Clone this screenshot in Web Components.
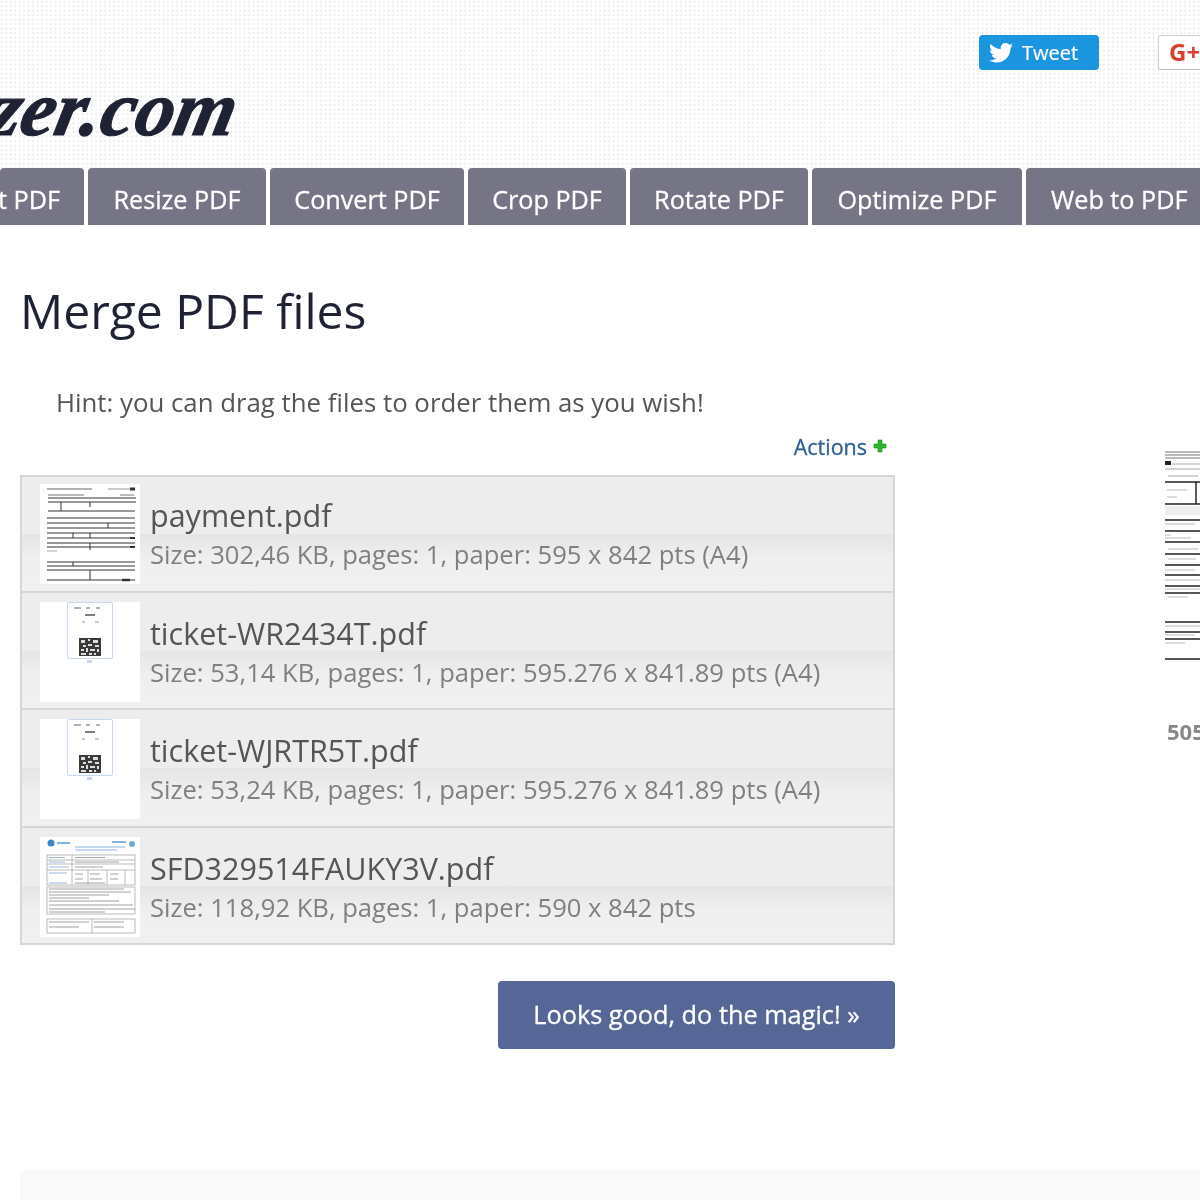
<!DOCTYPE html>
<html>
<head>
<meta charset="utf-8">
<title>Merge PDF files</title>
<style>
  html, body { margin: 0; padding: 0; background: #fff; overflow: hidden; }
  body { font-family: "Open Sans", sans-serif; width: 1200px; height: 1200px; filter: blur(.4px); }
</style>
</head>
<body>
<site-header></site-header>
<site-nav></site-nav>
<merge-page></merge-page>
<site-footer></site-footer>

<script>
class SiteHeader extends HTMLElement {
  constructor() {
    super();
    this.attachShadow({ mode: 'open' });
    this.shadowRoot.innerHTML = `
      <style>
        :host {
          display: flex;
          justify-content: space-between;
          height: 168px;
          box-sizing: border-box;
          overflow: hidden;
          background-color: #fff;
          background-image: radial-gradient(circle at 1.5px 1.5px, #ebebee 0.8px, transparent 1.3px);
          background-size: 4.5px 4.5px;
        }
        .logo {
          width: 240px;
          height: 168px;
          display: flex;
          justify-content: flex-end;
          align-items: flex-end;
          overflow: hidden;
          flex: none;
        }
        .logo span {
          white-space: nowrap;
          font: italic bold 78px "Liberation Serif", serif;
          color: #1f2233;
          -webkit-text-stroke: 1.2px #1f2233;
          line-height: 1;
          padding: 0 16px 20px 0;
          flex: none;
          transform: skewX(-12deg);
          transform-origin: right bottom;
        }
        .social { display: flex; gap: 59px; padding-top: 35px; width: 221px; flex: none; box-sizing: border-box; overflow: hidden; }
        .tweet {
          flex: none;
          width: 120px;
          height: 35px;
          box-sizing: border-box;
          background: #1b95e0;
          color: #fff;
          border-radius: 4px;
          display: flex;
          align-items: center;
          gap: 9px;
          padding-left: 10px;
          font-size: 20px;
          -webkit-text-stroke: .2px #fff;
        }
        .gplus {
          flex: none;
          width: 60px;
          height: 35px;
          box-sizing: border-box;
          background: #fff;
          border: 1px solid #d0d0d0;
          border-bottom-color: #bbb;
          border-radius: 3px;
          color: #d9402f;
          font-weight: 700;
          font-size: 24px;
          line-height: 31px;
          padding-left: 10px;
        }
      </style>
      <div class="logo"><span>PDFResizer.com</span></div>
      <div class="social">
        <div class="tweet">
          <svg width="24" height="20" viewBox="0 0 24 20"><path fill="#fff" d="M24 2.4c-.9.4-1.800.7-2.800.8 1-.6 1.800-1.600 2.200-2.700-1 .6-2 1-3.100 1.200C19.300.7 18 0 16.600 0c-2.700 0-4.900 2.200-4.900 4.900 0 .4 0 .8.100 1.100C7.700 5.800 4.100 3.900 1.700.9c-.4.700-.7 1.600-.7 2.500 0 1.700.9 3.200 2.200 4.100-.8 0-1.600-.2-2.200-.6v.1c0 2.400 1.700 4.400 3.900 4.800-.4.100-.8.200-1.300.2-.3 0-.6 0-.9-.1.600 2 2.400 3.400 4.600 3.400-1.700 1.300-3.800 2.100-6.100 2.100-.4 0-.8 0-1.200-.1C2.200 18.600 4.800 19.400 7.500 19.400c9.100 0 14-7.500 14-14v-.6c1-.7 1.800-1.500 2.500-2.400z"/></svg>
          <span>Tweet</span>
        </div>
        <div class="gplus">G+1</div>
      </div>
    `;
  }
}

class SiteNav extends HTMLElement {
  constructor() {
    super();
    this.attachShadow({ mode: 'open' });
    const items = [
      ['Split PDF', 84],
      ['Resize PDF', 178],
      ['Convert PDF', 194],
      ['Crop PDF', 158],
      ['Rotate PDF', 178],
      ['Optimize PDF', 210],
      ['Web to PDF', 190]
    ];
    this.shadowRoot.innerHTML = `
      <style>
        :host {
          display: flex;
          gap: 4px;
          height: 57px;
          overflow: hidden;
        }
        a {
          flex: none;
          display: flex;
          justify-content: center;
          height: 57px;
          box-sizing: border-box;
          background: #767585;
          color: #fff;
          border-radius: 4px 4px 0 0;
          font-size: 25.2px;
          -webkit-text-stroke: .3px #fff;
          line-height: 62px;
          white-space: nowrap;
          overflow: hidden;
        }
        a:first-of-type { justify-content: flex-end; padding-right: 24px; }
        a:last-of-type { justify-content: flex-start; padding-left: 25px; }
      </style>
      ${items.map(([label, w]) => `<a style="width:${w}px">${label}</a>`).join('')}
    `;
  }
}

class FileRow extends HTMLElement {
  constructor() {
    super();
    this.attachShadow({ mode: 'open' });
    this.shadowRoot.innerHTML = `
      <style>
        :host {
          display: flex;
          align-items: flex-start;
          height: 117.5px;
          box-sizing: border-box;
          border: 2px solid #d6d6d6;
          border-top-width: 0;
          background: linear-gradient(#ededed 0, #ededed 50%, #e5e5e5 50%, #efefef 72%, #f0f0f0 100%);
          padding: 9px 0 0 18px;
        }
        :host(:first-child) { border-top-width: 2px; padding-top: 7px; }
        .thumb { width: 100px; height: 100px; flex: none; background: #fff; overflow: hidden; }
        .info { margin-left: 10px; padding-top: 9px; }
        .name { font-size: 30.5px; line-height: 45px; color: #555; }
        .meta { font-size: 25.6px; line-height: 34px; color: #808080; }
      </style>
      <div class="thumb"><slot name="thumb"></slot></div>
      <div class="info">
        <div class="name"><slot name="name"></slot></div>
        <div class="meta"><slot name="meta"></slot></div>
      </div>
    `;
  }
}

class MergePage extends HTMLElement {
  constructor() {
    super();
    this.attachShadow({ mode: 'open' });
    const qr = `<svg slot="thumb" width="100" height="100" viewBox="0 0 100 100" style="display:block">
      <rect x="27.500" y="0.500" width="45" height="56" rx="1.500" fill="#fff" stroke="#c5d6ee"/>
      <path d="M34 6h7M46 6h4M56 6h4" stroke="#999" stroke-width="1.500"/>
      <path d="M45 13h10" stroke="#555" stroke-width="1.500"/>
      <path d="M42 20h3M55 20h4" stroke="#bbb" stroke-width="1.500"/>
      <rect x="39" y="36" width="22" height="18" fill="#3a3a3a"/>
      <path d="M41 38h4v3h-4zM48 37h2v2h-2zM53 38h5v3h-5zM43 43h3v2h-3zM48 42h4v2h-4zM55 43h4v2h-4zM41 47h3v2h-3zM46 46h2v4h-2zM50 47h5v2h-5zM57 47h2v3h-2zM41 51h5v2h-5zM49 51h3v2h-3zM54 51h2v2h-2z" fill="#ddd"/>
      <rect x="47" y="58" width="5" height="3" fill="#c5d6ee"/>
    </svg>`;
    const payment = `<svg slot="thumb" width="100" height="100" viewBox="0 0 100 100" style="display:block">
      <g stroke="#333" stroke-width="1" fill="none">
        <path d="M7 5h45" stroke="#999" stroke-width="1.500"/><path d="M68 5h22" stroke="#999"/><path d="M90 5h5" stroke-width="3"/>
        <path d="M8 11h36M80 11h14" stroke="#777"/>
        <path d="M8 14h88" /><path d="M8 18h88"/>
        <path d="M21 18v9M50 18v5"/><path d="M8 27h87"/>
        <path d="M7 34h88M7 39h88M7 44h88"/><path d="M68 39v5"/>
        <path d="M7 49h88M7 54h88M7 59h88M7 63h88"/><path d="M33 49v5M50 49v5M50 59v7"/>
        <path d="M7 67h10" stroke="#aaa"/>
        <path d="M7 78h88M7 82h88M7 86h88"/><path d="M33 78v4"/>
        <path d="M7 96h88"/><path d="M50 86v10"/><path d="M82 96h8" stroke-width="2.500"/>
        <path d="M90 54h5M90 63h5" stroke-width="2"/>
      </g>
    </svg>`;
    const sfd = `<svg slot="thumb" width="100" height="100" viewBox="0 0 100 100" style="display:block">
      <circle cx="11" cy="6" r="3.500" fill="#3d86c6"/><path d="M17 6h13M72 5h14" stroke="#5b9bd5" stroke-width="1.500"/><circle cx="92" cy="7" r="3" fill="#6fa8d8"/>
      <path d="M35 10h50M35 13h42" stroke="#8ab4dc" stroke-width="1"/>
      <g stroke="#aaa" stroke-width=".8" fill="none">
        <rect x="7" y="18" width="88" height="30"/>
        <path d="M7 23h88M7 27h88M7 33h88M32 18v30M48 33v15M67 33v15M85 33v15"/>
        <rect x="7" y="50" width="88" height="27"/>
        <rect x="7" y="82" width="88" height="14"/>
        <path d="M52 82v14"/>
      </g>
      <g stroke="#8a8a8a" stroke-width=".8">
        <path d="M35 20.500h30M35 25h44M35 30h28M35 37h8M50 37h10M70 37h8M35 42h8M50 42h12M70 42h8M35 46h30"/>
        <path d="M9 52h75M9 55h82M9 58h60M9 61h40M9 64h70M9 68h84M9 72h86M9 75h56"/>
        <path d="M9 85h40M54 85h30M9 90h30M54 90h30"/>
      </g>
      <path d="M9 20.500h16M9 25h16M9 30h20M9 36h18M9 46h18" stroke="#7ba6d0" stroke-width=".8"/>
    </svg>`;
    this.shadowRoot.innerHTML = `
      <style>
        :host {
          display: flex;
          padding-left: 20px;
          height: 945px;
          overflow: hidden;
        }
        .main { width: 875px; flex: none; }
        h1 {
          margin: 0;
          padding-top: 55px;
          font-weight: 400;
          font-size: 48px;
          line-height: 62px;
          color: #1f2233;
        }
        .hint { margin: 43px 0 0 36px; font-size: 25.8px; line-height: 34px; color: #555; }
        .actions {
          display: flex;
          justify-content: flex-end;
          align-items: center;
          gap: 6px;
          padding-right: 8px;
          margin-top: 10px;
          height: 34px;
          color: #2f6095;
          font-size: 21.5px;
          -webkit-text-stroke: .3px #2f6095;
        }
        .list { margin-top: 12px; }
        .submit { display: flex; justify-content: flex-end; margin-top: 36px; }
        .go {
          width: 397px;
          height: 68px;
          box-sizing: border-box;
          border-radius: 4px;
          background: #556697;
          color: #fff;
          font-size: 25.3px;
          -webkit-text-stroke: .3px #fff;
          line-height: 66px;
          text-align: center;
        }
        .side { margin-left: 270px; padding-top: 223px; flex: none; width: 160px; }
        .side svg { display: block; }
        .pages { margin-top: 46px; padding-left: 2px; font-size: 22px; font-weight: 700; color: #888; line-height: 30px; }
      </style>
      <div class="main">
        <h1>Merge PDF files</h1>
        <p class="hint">Hint: you can drag the files to order them as you wish!</p>
        <div class="actions">
          <span>Actions</span>
          <svg width="14" height="14" viewBox="0 0 14 14"><path d="M5 1h4v4h4v4H9v4H5V9H1V5h4z" fill="#2db52d" stroke="#1c8f1c" stroke-width=".6"/></svg>
        </div>
        <div class="list">
          <file-row>${payment}<span slot="name">payment.pdf</span><span slot="meta">Size: 302,46 KB, pages: 1, paper: 595 x 842 pts (A4)</span></file-row>
          <file-row>${qr}<span slot="name">ticket-WR2434T.pdf</span><span slot="meta">Size: 53,14 KB, pages: 1, paper: 595.276 x 841.89 pts (A4)</span></file-row>
          <file-row>${qr}<span slot="name">ticket-WJRTR5T.pdf</span><span slot="meta">Size: 53,24 KB, pages: 1, paper: 595.276 x 841.89 pts (A4)</span></file-row>
          <file-row>${sfd}<span slot="name">SFD329514FAUKY3V.pdf</span><span slot="meta">Size: 118,92 KB, pages: 1, paper: 590 x 842 pts</span></file-row>
        </div>
        <div class="submit"><div class="go">Looks good, do the magic! »</div></div>
      </div>
      <div class="side">
        <svg width="160" height="222" viewBox="0 0 160 222">
          <path d="M0 4h36M0 7h36M0 10h36" stroke="#777"/>
          <path d="M0 15h6" stroke="#222" stroke-width="4"/>
          <path d="M7 16h30M0 21h36M3 28h30" stroke="#aaa"/>
          <path d="M0 34h36M0 56h36M0 72h36M0 83h36M0 94h36M0 106h36M0 117h36M0 127h36M0 138h36M0 145h36M0 174h36M0 184h36M0 191h36M0 211h36" stroke="#222" stroke-width="1.500"/>
          <path d="M31 34v22" stroke="#222" stroke-width="1.500"/>
          <rect x="0" y="58" width="36" height="9" fill="#eee"/>
          <path d="M2 42h20M2 49h10M0 76h30M0 87h6M0 90h26M3 101h30M3 111h28M0 122h30M0 132h36M0 141h36M3 149h20M0 178h36M0 187h30M0 195h20" stroke="#bbb"/>
        </svg>
        <div class="pages">505 x 842</div>
      </div>
    `;
  }
}

class SiteFooter extends HTMLElement {
  constructor() {
    super();
    this.attachShadow({ mode: 'open' });
    this.shadowRoot.innerHTML = `
      <style>
        :host { display: block; margin: 0 0 0 20px; }
        div { height: 30px; background: #f9f9f9; }
      </style>
      <div></div>
    `;
  }
}

customElements.define('site-header', SiteHeader);
customElements.define('site-nav', SiteNav);
customElements.define('file-row', FileRow);
customElements.define('merge-page', MergePage);
customElements.define('site-footer', SiteFooter);
</script>
</body>
</html>
